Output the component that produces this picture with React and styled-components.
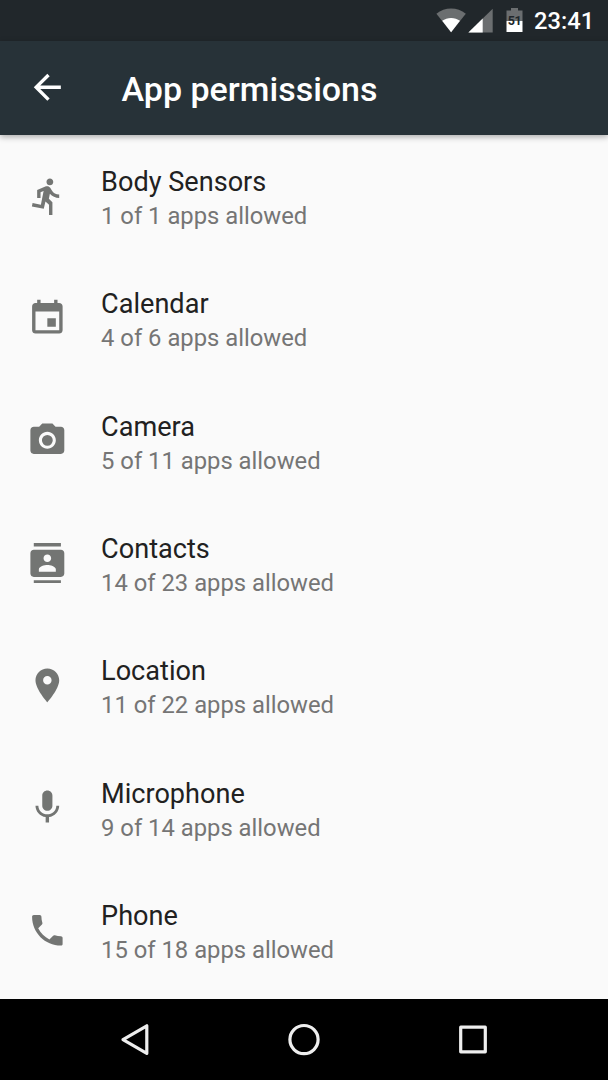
import React from 'react';
import styled, { createGlobalStyle } from "styled-components";

const permissions = [
    {
        name: "Body Sensors",
        summary: "1 of 1 apps allowed",
        icon: "M13.49 5.48c1.1 0 2-.9 2-2s-.9-2-2-2-2 .9-2 2 .9 2 2 2zm-3.6 13.9l1-4.4 2.1 2v6h2v-7.5l-2.1-2 .6-3c1.3 1.5 3.3 2.5 5.5 2.5v-2c-1.9 0-3.5-1-4.3-2.4l-1-1.6c-.4-.6-1-1-1.7-1-.3 0-.5.1-.8.1l-5.2 2.2v4.7h2v-3.4l1.8-.7-1.6 8.1-4.9-1-.4 2 7 1.4z",
    },
    {
        name: "Calendar",
        summary: "4 of 6 apps allowed",
        icon: "M17 12h-5v5h5v-5zM16 1v2H8V1H6v2H5c-1.11 0-1.99.9-1.99 2L3 19c0 1.1.89 2 2 2h14c1.1 0 2-.9 2-2V5c0-1.1-.9-2-2-2h-1V1h-2zm3 18H5V8h14v11z",
    },
    {
        name: "Camera",
        summary: "5 of 11 apps allowed",
        icon: "M15.2 12a3.2 3.2 0 1 1-6.4 0a3.2 3.2 0 1 1 6.4 0zM9 2L7.17 4H4c-1.1 0-2 .9-2 2v12c0 1.1.9 2 2 2h16c1.1 0 2-.9 2-2V6c0-1.1-.9-2-2-2h-3.17L15 2H9zm3 15c-2.76 0-5-2.24-5-5s2.24-5 5-5 5 2.24 5 5-2.24 5-5 5z",
    },
    {
        name: "Contacts",
        summary: "14 of 23 apps allowed",
        icon: "M20 0H4v2h16V0zM4 24h16v-2H4v2zM20 4H4c-1.1 0-2 .9-2 2v12c0 1.1.9 2 2 2h16c1.1 0 2-.9 2-2V6c0-1.1-.9-2-2-2zm-8 2.75c1.24 0 2.25 1.01 2.25 2.25s-1.01 2.25-2.25 2.25S9.75 10.24 9.75 9 10.76 6.75 12 6.75zM17 17H7v-1.5c0-1.67 3.33-2.5 5-2.5s5 .83 5 2.5V17z",
    },
    {
        name: "Location",
        summary: "11 of 22 apps allowed",
        icon: "M12 2C8.13 2 5 5.13 5 9c0 5.25 7 13 7 13s7-7.75 7-13c0-3.87-3.13-7-7-7zm0 9.5c-1.38 0-2.5-1.12-2.5-2.5s1.12-2.5 2.5-2.5 2.5 1.12 2.5 2.5-1.12 2.5-2.5 2.5z",
    },
    {
        name: "Microphone",
        summary: "9 of 14 apps allowed",
        icon: "M12 14c1.66 0 2.99-1.34 2.99-3L15 5c0-1.66-1.34-3-3-3S9 3.34 9 5v6c0 1.66 1.34 3 3 3zm5.3-3c0 3-2.54 5.1-5.3 5.1S6.7 14 6.7 11H5c0 3.41 2.72 6.23 6 6.72V21h2v-3.28c3.28-.48 6-3.3 6-6.72h-1.7z",
    },
    {
        name: "Phone",
        summary: "15 of 18 apps allowed",
        icon: "M6.62 10.79c1.44 2.83 3.76 5.14 6.59 6.59l2.2-2.2c.27-.27.67-.36 1.02-.24 1.12.37 2.33.57 3.57.57.55 0 1 .45 1 1V20c0 .55-.45 1-1 1-9.39 0-17-7.61-17-17 0-.55.45-1 1-1h3.5c.55 0 1 .45 1 1 0 1.25.2 2.45.57 3.57.11.35.03.74-.25 1.02l-2.2 2.2z",
    },
];

function StatusIcons() {
    return (
        <>
            <WifiIcon width="30" height="25" viewBox="0 0 30 25">
                <path d="M0.4 5.7C8.7-1.4 21.5-1.4 29.8 5.7L15.1 24.3z" fill="#6b6e70"/>
                <path d="M6.2 12.8C11 8.9 19.2 8.9 24 12.8L15.1 24.3z" fill="#fff"/>
            </WifiIcon>
            <SignalIcon width="25" height="25" viewBox="0 0 25 25">
                <path d="M24.7 0.7V24.5H0.4z" fill="#6b6e70"/>
                <path d="M14.7 10.5V24.5H0.4z" fill="#fff"/>
            </SignalIcon>
            <Battery>
                <svg width="17" height="25" viewBox="0 0 17 25">
                    <path d="M5 0h7v2.6h4.5V13H0.5V2.6H5z" fill="#6b6e70"/>
                    <path d="M0.5 13h16v11H0.5z" fill="#fff"/>
                </svg>
                <BatteryLevel>51</BatteryLevel>
            </Battery>
        </>
    )
}

function Permission({ name, summary, icon }) {
    return (
        <Row>
            <RowIcon viewBox="0 0 24 24">
                <path d={icon}/>
            </RowIcon>
            <RowText>
                <RowTitle>{name}</RowTitle>
                <RowSummary>{summary}</RowSummary>
            </RowText>
        </Row>
    )
}

function App() {
    return (
        <Screen>
            <GlobalStyle/>
            <StatusBar>
                <StatusIcons/>
                <Clock>23:41</Clock>
            </StatusBar>
            <Toolbar>
                <BackIcon viewBox="0 0 24 24">
                    <path d="M20 11H7.83l5.59-5.59L12 4l-8 8 8 8 1.41-1.41L7.83 13H20v-2z"/>
                </BackIcon>
                <Title>App permissions</Title>
            </Toolbar>
            <List>
                {permissions.map((permission) => (
                    <Permission key={permission.name} {...permission}/>
                ))}
            </List>
            <NavBar>
                <NavButton>
                    <svg width="34" height="34" viewBox="0 0 34 34">
                        <path d="M28.8 2.8V30.4L5 16.6z"/>
                    </svg>
                </NavButton>
                <NavButton>
                    <svg width="34" height="34" viewBox="0 0 34 34">
                        <circle cx="17" cy="16.6" r="14.1"/>
                    </svg>
                </NavButton>
                <NavButton>
                    <svg width="34" height="34" viewBox="0 0 34 34">
                        <rect x="4.7" y="4.2" width="24.6" height="24.6"/>
                    </svg>
                </NavButton>
            </NavBar>
        </Screen>
    )
}

export default App

const GlobalStyle = createGlobalStyle`
    * {
        box-sizing : border-box;
    }
    body {
        margin : 0;
        font-family : Roboto, "Noto Sans", sans-serif;
    }
`;

const Screen = styled.div`
    display : flex;
    flex-direction : column;
    width : 608px;
    height : 1080px;
    overflow : hidden;
    background : #fafafa;
`;

const StatusBar = styled.div`
    display : flex;
    flex-shrink : 0;
    align-items : flex-start;
    justify-content : flex-end;
    height : 41px;
    padding : 8px 14px 0 0;
    background : #21272b;
`;

const WifiIcon = styled.svg`
    margin-right : 2px;
`;

const SignalIcon = styled.svg`
    margin-right : 13px;
`;

const Battery = styled.div`
    position : relative;
    width : 17px;
    height : 25px;
    margin-right : 11px;
    svg {
        display : block;
    }
`;

const BatteryLevel = styled.span`
    position : absolute;
    top : 6px;
    left : 0;
    width : 17px;
    color : #21272b;
    font-size : 12.5px;
    font-weight : 700;
    letter-spacing : -0.4px;
    line-height : 13px;
    text-align : center;
`;

const Clock = styled.span`
    width : 60px;
    color : #fff;
    font-size : 23.7px;
    font-weight : 500;
    line-height : 27px;
`;

const Toolbar = styled.header`
    display : flex;
    flex-shrink : 0;
    align-items : center;
    height : 94px;
    padding-left : 27px;
    background : #273238;
    box-shadow : 0 2px 6px rgba(0, 0, 0, 0.32);
    z-index : 1;
`;

const BackIcon = styled.svg`
    width : 40.6px;
    height : 40.6px;
    margin-top : -0.6px;
    fill : #fff;
`;

const Title = styled.h1`
    margin : 2px 0 0 54px;
    color : #fff;
    font-size : 34px;
    font-weight : 500;
    line-height : 40px;
`;

const List = styled.main`
    flex : 1;
    min-height : 0;
    overflow : hidden;
`;

const Row = styled.div`
    display : flex;
    align-items : center;
    height : 122.33px;
    padding-left : 26.8px;
`;

const RowIcon = styled.svg`
    flex-shrink : 0;
    width : 40.7px;
    height : 40.7px;
    margin-top : -0.4px;
    fill : #737573;
`;

const RowText = styled.div`
    margin-left : 33.6px;
    padding-top : 3.6px;
`;

const RowTitle = styled.div`
    color : #212121;
    font-size : 27.1px;
    line-height : 36px;
`;

const RowSummary = styled.div`
    color : #757575;
    font-size : 23.8px;
    line-height : 32px;
`;

const NavBar = styled.nav`
    display : flex;
    flex-shrink : 0;
    justify-content : center;
    height : 81px;
    background : #000;
`;

const NavButton = styled.div`
    display : flex;
    align-items : center;
    justify-content : center;
    width : 169px;
    svg {
        fill : none;
        stroke : #eee;
        stroke-width : 3.2;
        stroke-linejoin : round;
    }
`;
